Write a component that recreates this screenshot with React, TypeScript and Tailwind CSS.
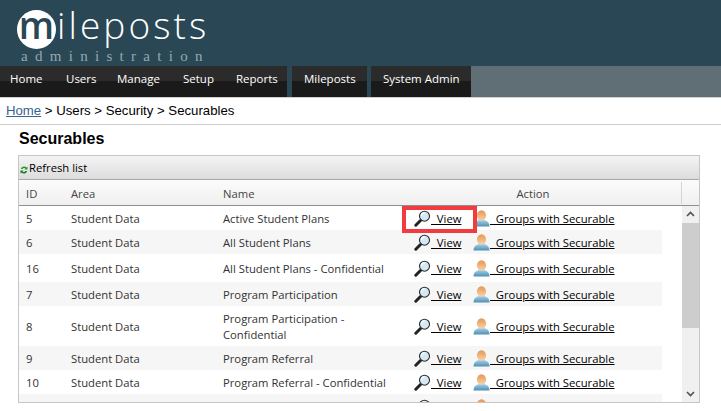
import React from "react";

const rows: { id: string; name: React.ReactNode; h: string; alt?: boolean }[] = [
  { id: "5", name: "Active Student Plans", h: "h-6" },
  { id: "6", name: "All Student Plans", h: "h-6", alt: true },
  { id: "16", name: "All Student Plans - Confidential", h: "h-7" },
  { id: "7", name: "Program Participation", h: "h-6", alt: true },
  { id: "8", name: "Program Participation - Confidential", h: "h-10" },
  { id: "9", name: "Program Referral", h: "h-6", alt: true },
  { id: "10", name: "Program Referral - Confidential", h: "h-6" },
];

function Lens() {
  return (
    <svg width="17" height="17" viewBox="0 0 17 17" className="shrink-0">
      <path d="M6.5 10.5 L1.8 15.2" stroke="#222" strokeWidth="3" strokeLinecap="round" />
      <circle cx="10.5" cy="6.2" r="5" fill="#d4e9f5" stroke="#2b2b2b" strokeWidth="1.1" />
      <path d="M7.5 6 A3 3 0 0 1 10.5 3" stroke="#fff" strokeWidth="1.3" fill="none" />
    </svg>
  );
}

function Person() {
  return (
    <svg width="17" height="17" viewBox="0 0 17 17" className="shrink-0">
      <defs>
        <linearGradient id="body" x1="0" y1="0" x2="0" y2="1">
          <stop offset="0" stopColor="#a5d2ea" />
          <stop offset="1" stopColor="#4f8fb4" />
        </linearGradient>
        <linearGradient id="head" x1="0" y1="0" x2="0" y2="1">
          <stop offset="0" stopColor="#e8964f" />
          <stop offset="1" stopColor="#f6d3ae" />
        </linearGradient>
      </defs>
      <path d="M0.5 16.5 C0.5 11.5 4 10 8.5 10 C13 10 16.5 11.5 16.5 16.5 Z" fill="url(#body)" />
      <ellipse cx="8.5" cy="5.5" rx="4.6" ry="5.2" fill="url(#head)" />
    </svg>
  );
}

function Refresh() {
  return (
    <svg width="8" height="10" viewBox="0 0 8 10" className="shrink-0 mt-[3px]">
      <path d="M1 4 C1 1.5 5 0.5 6.5 2.5 L7.5 1.5 V4.5 H4.5 L5.5 3.5 C4.5 2.5 3 3 2.8 4 Z" fill="#1d9a2a" />
      <path d="M7 6 C7 8.5 3 9.5 1.5 7.5 L0.5 8.5 V5.5 H3.5 L2.5 6.5 C3.5 7.5 5 7 5.2 6 Z" fill="#137a20" />
    </svg>
  );
}

export default function App() {
  return (
    <div className="w-[721px] h-[411px] overflow-hidden bg-white font-['Liberation_Sans',sans-serif]">
      <header className="h-[66px] bg-[#2a4755] pl-[17px] pt-[9px] flex flex-col">
        <div className="flex items-center h-[40px]">
          <div className="w-[39px] h-[39px] rounded-full bg-white flex items-center justify-center text-[#2a4755] text-[37px] leading-none font-['Open_Sans',sans-serif] font-semibold shrink-0">
            <span className="-mt-[9px]">m</span>
          </div>
          <span className="text-white text-[37px] leading-none tracking-[3.1px] font-['Open_Sans',sans-serif] font-light -mt-[9px] ml-[1px]">
            ileposts
          </span>
        </div>
        <div className="text-[#97a7ae] text-[15px] leading-[15px] tracking-[7.3px] font-['Liberation_Serif',serif] pl-[4px] whitespace-nowrap">
          administration
        </div>
      </header>

      <nav className="h-[31px] bg-[#5f6f75] flex font-['Open_Sans',sans-serif] text-[11.5px] text-white">
        <div className="bg-[linear-gradient(#2b2b2b_0,#2b2b2b_50%,#1a1a1a_50%,#1a1a1a_100%)] h-[31px] w-[287px] flex pt-[4px] pl-[10px]">
          <span className="w-[56px]">Home</span>
          <span className="w-[51px]">Users</span>
          <span className="w-[66px]">Manage</span>
          <span className="w-[53px]">Setup</span>
          <span>Reports</span>
        </div>
        <div className="w-[5px] bg-[#2a4755]" />
        <div className="bg-[linear-gradient(#2b2b2b_0,#2b2b2b_50%,#1a1a1a_50%,#1a1a1a_100%)] h-[31px] w-[75px] pt-[4px] pl-[12px]">
          Mileposts
        </div>
        <div className="w-[4px] bg-[#2a4755]" />
        <div className="bg-[linear-gradient(#2b2b2b_0,#2b2b2b_50%,#1a1a1a_50%,#1a1a1a_100%)] h-[31px] w-[100px] pt-[4px] pl-[12px]">
          System Admin
        </div>
      </nav>

      <div className="h-[28px] border-t border-b border-t-[#d0d0d0] border-b-[#cccccc] pl-[6px] flex items-center text-[13.2px] text-black">
        <a className="text-[#35648f] underline">Home</a>
        <span className="whitespace-pre"> &gt; Users &gt; Security &gt; Securables</span>
      </div>

      <h1 className="ml-[19px] mt-[4px] h-[26px] text-[16px] leading-[20px] font-bold text-black">Securables</h1>

      <section className="relative mx-[18px] w-[682px] h-[248px] border border-[#c6c6c6] font-['Open_Sans',sans-serif] text-[11.25px] leading-[16px] text-[#333333] overflow-hidden">
        <div className="h-[24px] border-b border-[#a8a8a8] bg-[linear-gradient(#f4f4f4,#dcdcdc)] flex items-center gap-[1px] pl-[1px] pt-[1px] text-black">
          <Refresh />
          <span>Refresh list</span>
        </div>
        <div className="h-[26px] border-b border-[#8f8f8f] bg-[linear-gradient(#fbfbfb,#f0f0f0)] flex items-center pt-[3px] text-[#444444]">
          <span className="w-[52px] pl-[7px]">ID</span>
          <span className="w-[152px]">Area</span>
          <span className="w-[270px]">Name</span>
          <span className="w-[80px] text-center">Action</span>
          <span className="ml-auto h-full -mt-[3px] w-[18px] border-l border-[#d4d4d4]" />
        </div>
        <div className="flex h-[196px]">
          <div className="w-[643px] flex flex-col">
            {rows.map((r) => (
              <div key={r.id} className={`${r.h} shrink-0 flex items-center ${r.alt ? "bg-[#f6f6f6]" : "bg-white"}`}>
                <span className="w-[52px] pl-[7px] pt-[1px]">{r.id}</span>
                <span className="w-[152px] pt-[1px]">Student Data</span>
                <span className="w-[191px] pr-[6px] pt-[1px]">{r.name}</span>
                <Lens />
                <a className="w-[30px] text-black underline whitespace-pre pt-[1px]">  View</a>
                <span className="ml-[12px]"><Person /></span>
                <a className="text-black underline whitespace-pre pt-[1px]">  Groups with Securable</a>
              </div>
            ))}
            <div className="flex-1 min-h-0 bg-[#f6f6f6] flex overflow-hidden pt-[5px]">
              <span className="ml-[395px]"><Lens /></span>
              <span className="ml-[42px]"><Person /></span>
            </div>
          </div>
          <div className="ml-auto w-[17px] bg-[#f0f0f0] flex flex-col items-center text-[#505050]">
            <svg width="17" height="17" viewBox="0 0 17 17" className="shrink-0">
              <path d="M5 10 L8.5 6.5 L12 10" fill="none" stroke="#505050" strokeWidth="1.6" />
            </svg>
            <div className="w-full h-[105px] bg-[#cdcdcd]" />
            <div className="flex-1" />
            <svg width="17" height="17" viewBox="0 0 17 17" className="shrink-0">
              <path d="M5 7 L8.5 10.5 L12 7" fill="none" stroke="#505050" strokeWidth="1.6" />
            </svg>
          </div>
        </div>
        <div className="absolute left-[383px] top-[50px] w-[75px] h-[27px] border-4 border-[#f23b3f]" />
      </section>
    </div>
  );
}
